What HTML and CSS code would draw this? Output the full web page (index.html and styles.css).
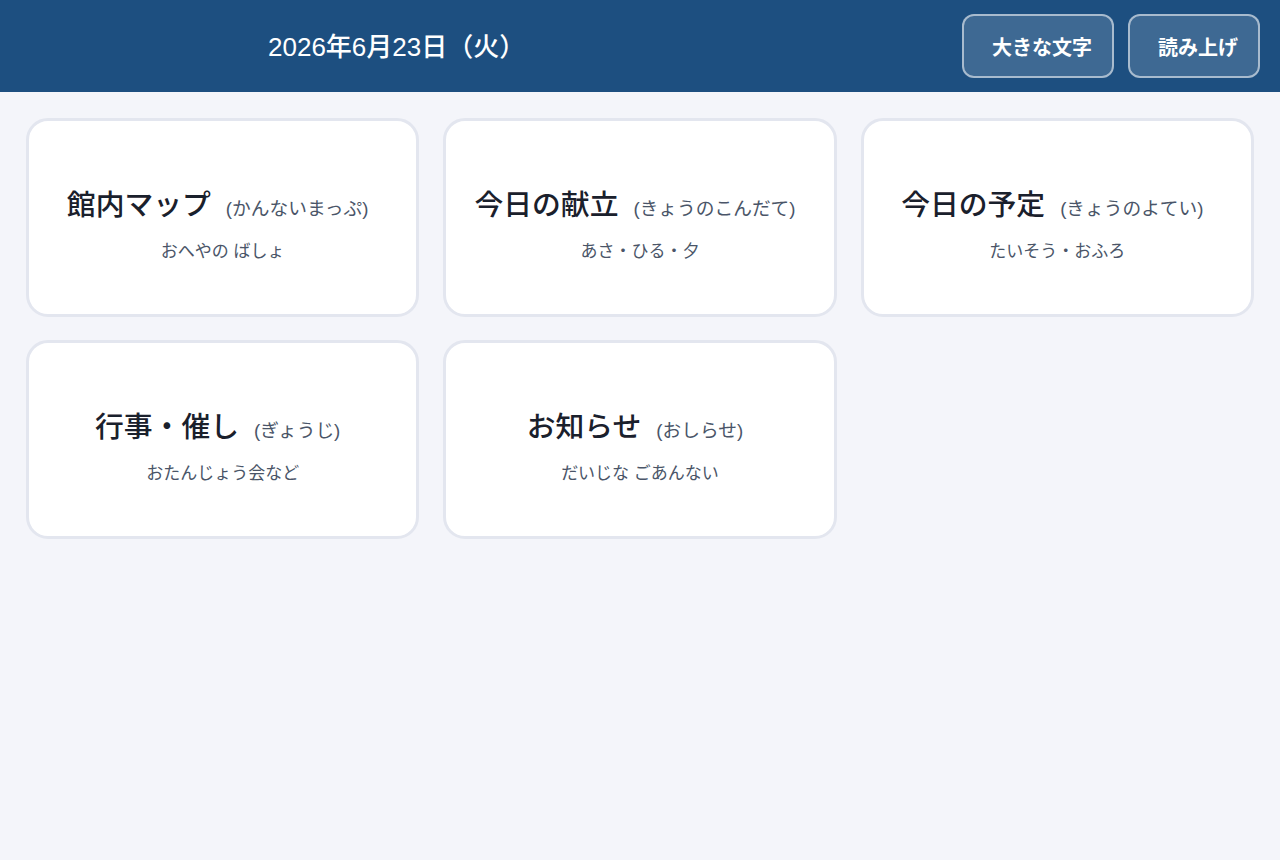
FILE: index.html
```html
<!DOCTYPE html>
<html lang="ja">
<head>
    <meta charset="UTF-8">
    <meta name="viewport" content="width=device-width, initial-scale=1.0">
    <title>ホーム</title>
    <link rel="stylesheet" href="styles.css">
</head>
<body>
    <header class="top-bar">
        <div class="today">2026年6月23日（火）</div>
        <div class="tools">
            <button class="tool-btn">大きな文字</button>
            <button class="tool-btn">読み上げ</button>
        </div>
    </header>

    <main class="menu-grid">
        <a class="menu-card" href="#">
            <div class="card-title">館内マップ<span class="kana">(かんないまっぷ)</span></div>
            <div class="card-sub">おへやの ばしょ</div>
        </a>
        <a class="menu-card" href="#">
            <div class="card-title">今日の献立<span class="kana">(きょうのこんだて)</span></div>
            <div class="card-sub">あさ・ひる・夕</div>
        </a>
        <a class="menu-card" href="#">
            <div class="card-title">今日の予定<span class="kana">(きょうのよてい)</span></div>
            <div class="card-sub">たいそう・おふろ</div>
        </a>
        <a class="menu-card" href="#">
            <div class="card-title">行事・催し<span class="kana">(ぎょうじ)</span></div>
            <div class="card-sub">おたんじょう会など</div>
        </a>
        <a class="menu-card" href="#">
            <div class="card-title">お知らせ<span class="kana">(おしらせ)</span></div>
            <div class="card-sub">だいじな ごあんない</div>
        </a>
    </main>
</body>
</html>
```

FILE: styles.css
```css
body {
    margin: 0;
    font-family: "Liberation Sans", "Noto Sans CJK JP", sans-serif;
    background-color: #f4f5fa;
    color: #1a202c;
}
.top-bar {
    display: flex;
    align-items: center;
    justify-content: space-between;
    height: 92px;
    padding: 0 20px 0 268px;
    box-sizing: border-box;
    background-color: #1d4f80;
    color: #fff;
}
.today {
    font-size: 26px;
    font-weight: 500;
    margin-bottom: 4px;
}
.tools {
    display: flex;
    gap: 14px;
}
.tool-btn {
    height: 64px;
    padding: 0 20px 0 28px;
    font-family: inherit;
    font-size: 20px;
    font-weight: 700;
    color: #fff;
    background-color: rgba(255, 255, 255, 0.15);
    border: 2px solid rgba(255, 255, 255, 0.55);
    border-radius: 12px;
    cursor: pointer;
}
.menu-grid {
    display: grid;
    grid-template-columns: repeat(3, 1fr);
    gap: 23px 24px;
    padding: 26px 26px;
}
.menu-card {
    display: flex;
    flex-direction: column;
    align-items: center;
    justify-content: center;
    height: 199px;
    padding-top: 13px;
    box-sizing: border-box;
    background-color: #fff;
    border: 3px solid #e3e6ef;
    border-radius: 22px;
    text-decoration: none;
    color: inherit;
}
.card-title {
    font-size: 28.8px;
    font-weight: 500;
    line-height: 40px;
}
.kana {
    font-size: 0.65em;
    font-weight: 400;
    color: #4a5568;
    margin: 0 10px 0 15px;
}
.card-sub {
    margin-top: 11px;
    font-size: 17px;
    line-height: 24px;
    color: #4a5568;
}
```
